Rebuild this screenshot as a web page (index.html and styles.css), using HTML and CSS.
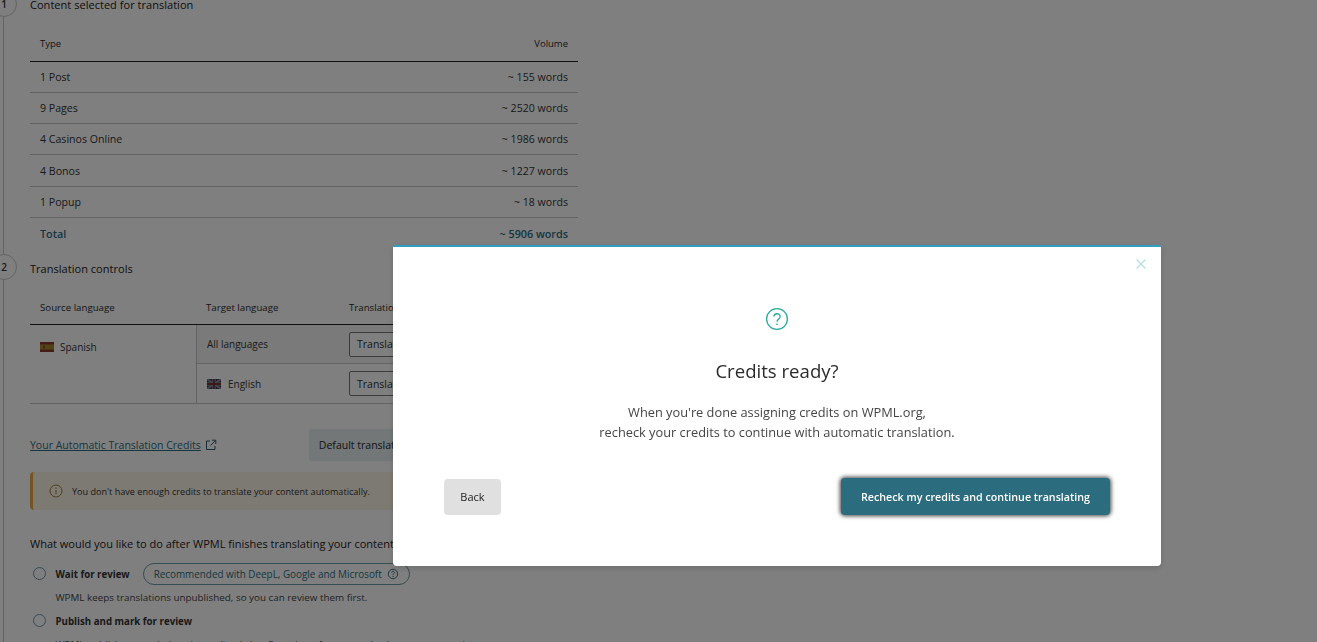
FILE: index.html
```html
<!DOCTYPE html>
<html lang="en">
<head>
<meta charset="utf-8">
<title>Credits ready?</title>
<link rel="stylesheet" href="styles.css">
</head>
<body>
<main class="page">
  <div class="rail"></div>
  <section class="step step-one">
    <span class="badge badge-one">1</span>
    <h2 class="step-title">Content selected for translation</h2>
    <table class="volume">
      <thead><tr><th>Type</th><th class="num">Volume</th></tr></thead>
      <tbody>
        <tr><td>1 Post</td><td class="num">~ 155 words</td></tr>
        <tr><td>9 Pages</td><td class="num">~ 2520 words</td></tr>
        <tr><td>4 Casinos Online</td><td class="num">~ 1986 words</td></tr>
        <tr><td>4 Bonos</td><td class="num">~ 1227 words</td></tr>
        <tr><td>1 Popup</td><td class="num">~ 18 words</td></tr>
        <tr class="total"><td>Total</td><td class="num">~ 5906 words</td></tr>
      </tbody>
    </table>
  </section>
  <section class="step step-two">
    <span class="badge badge-two">2</span>
    <h2 class="step-title">Translation controls</h2>
    <div class="controls">
      <div class="c-head c-source">Source language</div>
      <div class="c-head c-target">Target language</div>
      <div class="c-head c-method">Translation method</div>
      <div class="c-lang">
        <svg class="flag" viewBox="0 0 14 10"><rect width="14" height="10" fill="#8a3b2c"/><rect y="2.5" width="14" height="5" fill="#a5892f"/><rect x="3" y="3.5" width="2" height="3" fill="#8a4a2c"/></svg>
        <span>Spanish</span>
      </div>
      <div class="c-cell c-row1 c-tint">All languages</div>
      <div class="c-cell c-row1 c-tint c-pick"><div class="select">Translate automatically</div></div>
      <div class="c-cell c-row2">
        <svg class="flag" viewBox="0 0 14 10"><rect width="14" height="10" fill="#2f3a63"/><path d="M0 0L14 10M14 0L0 10" stroke="#8a8a90" stroke-width="2"/><path d="M7 0V10M0 5H14" stroke="#8a8a90" stroke-width="3.4"/><path d="M7 0V10M0 5H14" stroke="#7a2d35" stroke-width="1.8"/></svg>
        <span>English</span>
      </div>
      <div class="c-cell c-row2 c-pick"><div class="select">Translate automatically</div></div>
    </div>
    <div class="credits">
      <a class="credits-link" href="#">Your Automatic Translation Credits</a>
      <svg class="ext" viewBox="0 0 12 12"><path d="M5 2H1.5V10.5H10V7M7 1.2H10.8V5M10.6 1.4L5.5 6.5" fill="none" stroke="#2b5f6e" stroke-width="1"/></svg>
      <div class="default-btn">Default translation settings</div>
    </div>
    <div class="warning">
      <svg class="warn-icon" viewBox="0 0 14 14"><circle cx="7" cy="7" r="6" fill="none" stroke="#a67f3a" stroke-width="1"/><path d="M7 6V10.4M7 3.6V5" stroke="#a67f3a" stroke-width="1"/></svg>
      <span>You don't have enough credits to translate your content automatically.</span>
    </div>
    <h3 class="after-title">What would you like to do after WPML finishes translating your content?</h3>
    <div class="option">
      <span class="radio"></span>
      <div class="option-line">
        <strong>Wait for review</strong>
        <span class="pill">Recommended with DeepL, Google and Microsoft
          <svg class="pill-icon" viewBox="0 0 12 12"><circle cx="6" cy="6" r="4.7" fill="none" stroke="#2b5f6e" stroke-width=".9"/><path d="M4.6 4.8C4.6 3 7.4 3 7.4 4.7C7.4 5.8 6 5.8 6 7.1M6 8V9" fill="none" stroke="#2b5f6e" stroke-width=".9"/></svg>
        </span>
      </div>
      <p class="option-text">WPML keeps translations unpublished, so you can review them first.</p>
    </div>
    <div class="option">
      <span class="radio"></span>
      <div class="option-line"><strong>Publish and mark for review</strong></div>
      <p class="option-text">WPML publishes translations immediately but flags them for you to check at your convenience.</p>
    </div>
  </section>
</main>
<div class="overlay"></div>
<div class="modal">
  <svg class="close" viewBox="0 0 12 12"><path d="M1.5 1.5L10.5 10.5M10.5 1.5L1.5 10.5" stroke="#b5dbe6" stroke-width="1.1" fill="none"/></svg>
  <svg class="q-icon" viewBox="0 0 24 24"><circle cx="12" cy="12" r="10.4" fill="none" stroke="#2aaa9c" stroke-width="1.3"/><path d="M8.9 9.6C8.9 5.8 15.2 5.8 15.2 9.5C15.2 12 12 12 12 14.8" fill="none" stroke="#2aaa9c" stroke-width="1.3"/><path d="M12 16.4V18" stroke="#2aaa9c" stroke-width="1.4"/></svg>
  <h1 class="modal-title">Credits ready?</h1>
  <p class="modal-text">When you're done assigning credits on WPML.org,<br>recheck your credits to continue with automatic translation.</p>
  <div class="modal-actions">
    <button class="btn btn-back" type="button">Back</button>
    <button class="btn btn-primary" type="button">Recheck my credits and continue translating</button>
  </div>
</div>
</body>
</html>
```
FILE: styles.css
```css
* { box-sizing: border-box; }
html, body { margin: 0; height: 100%; overflow: hidden; }
body {
  background: #fff;
  color: #2b2b2b;
  font-family: "Open Sans", "Liberation Sans", sans-serif;
  font-size: 11px;
}
.page {
  position: relative;
  width: 1317px;
  height: 642px;
  overflow: hidden;
  padding-left: 30px;
}
.rail {
  position: absolute;
  left: 3px;
  top: 0;
  bottom: 0;
  width: 1px;
  background: #c8c8c8;
}
.step { position: relative; }
.step-one { margin-top: -4px; height: 258px; }
.badge {
  position: absolute;
  left: -39px;
  width: 26px;
  height: 26px;
  border: 1px solid #c8c8c8;
  border-radius: 50%;
  background: #fff;
  display: flex;
  align-items: center;
  justify-content: center;
  font-size: 10px;
  font-weight: 600;
  color: #333;
}
.badge-one { top: -5px; }
.badge-two { top: 0; }
.step-title {
  margin: 0;
  font-size: 11px;
  font-weight: 400;
  line-height: 18px;
  color: #222;
  letter-spacing: .03px;
}
.volume {
  width: 548px;
  margin-top: 15px;
  border-collapse: collapse;
  table-layout: fixed;
}
.volume th {
  height: 32px;
  padding: 0 10px 3px;
  text-align: left;
  font-size: 9.5px;
  font-weight: 500;
  border-bottom: 1px solid #222;
}
.volume td {
  height: 31.3px;
  padding: 0 10px;
  font-size: 10.6px;
  color: #333;
  border-bottom: 1px solid #c6c6c6;
}
.volume .num { text-align: right; }
.volume .total td {
  border-bottom: 0;
  color: #2b6c7e;
  font-size: 10.8px;
  font-weight: 600;
}
.step-two { padding-top: 6px; }
.controls {
  margin-top: 15px;
  width: 700px;
  display: grid;
  grid-template-columns: 167px 142px 1fr;
  grid-template-rows: 32px 39px 40px;
  font-size: 10px;
}
.c-head {
  display: flex;
  align-items: center;
  padding: 0 0 3px 10px;
  font-size: 9.7px;
  font-weight: 500;
  border-bottom: 1px solid #222;
}
.c-target { padding-left: 9px; }
.c-lang {
  grid-row: 2 / 4;
  grid-column: 1;
  padding: 16px 0 0 10px;
  display: flex;
  align-items: flex-start;
  gap: 6px;
  border-right: 1px solid #c6c6c6;
  border-bottom: 1px solid #c6c6c6;
  color: #333;
  line-height: 12px;
}
.c-lang .flag { margin-top: 1px; }
.c-cell {
  display: flex;
  align-items: center;
  gap: 7px;
  padding-left: 10px;
  border-bottom: 1px solid #c6c6c6;
  color: #333;
}
.c-tint { background: #f5f5f5; }
.flag { width: 14px; height: 10px; flex: none; }
.select {
  width: 210px;
  height: 25px;
  padding-left: 7px;
  display: flex;
  align-items: center;
  border: 1px solid #777;
  border-radius: 2px;
  background: #fff;
  font-size: 10.5px;
}
.credits {
  margin-top: 25px;
  height: 32px;
  display: flex;
  align-items: center;
}
.credits-link {
  color: #2b6c7e;
  font-size: 10.5px;
  text-decoration: underline;
}
.ext { width: 12px; height: 12px; margin-left: 4px; }
.default-btn {
  margin-left: 92px;
  width: 200px;
  height: 32px;
  padding-left: 10px;
  display: flex;
  align-items: center;
  background: #e6eef0;
  border-radius: 3px;
  font-size: 10.5px;
}
.warning {
  margin-top: 11px;
  width: 600px;
  height: 38px;
  padding-left: 16px;
  display: flex;
  align-items: center;
  gap: 9px;
  background: #fbf5e6;
  border-left: 3px solid #e8aa45;
  border-radius: 4px 0 0 4px;
  font-size: 9.1px;
  color: #333;
}
.warn-icon { width: 14px; height: 14px; }
.after-title {
  margin: 25px 0 0;
  font-size: 11px;
  font-weight: 400;
  line-height: 18px;
  color: #222;
}
.option { position: relative; padding-left: 25.5px; }
.option-line {
  display: flex;
  align-items: center;
  gap: 13px;
  height: 22px;
  margin-top: 10px;
  font-size: 9.7px;
}
.option + .option .option-line { margin-top: 4px; }
.option-line strong { font-weight: 700; color: #333; }
.pill {
  height: 22px;
  padding: 0 10px;
  display: flex;
  align-items: center;
  gap: 5px;
  border: 1px solid #6a9aa8;
  border-radius: 11px;
  color: #2b6c7e;
  font-size: 9.9px;
}
.pill-icon { width: 12px; height: 12px; }
.option-text {
  margin: 4px 0 0;
  font-size: 9.85px;
  line-height: 17px;
  color: #444;
}
.radio {
  position: absolute;
  left: 3px;
  top: 4px;
  width: 13px;
  height: 13px;
  border: 1px solid #6a9aa8;
  border-radius: 50%;
  background: #fff;
}
.overlay {
  position: fixed;
  inset: 0;
  background: rgba(0, 0, 0, .5);
}
.modal {
  position: fixed;
  left: 393px;
  top: 245px;
  width: 768px;
  height: 321px;
  padding-top: 60px;
  display: flex;
  flex-direction: column;
  align-items: center;
  background: #fff;
  border-top: 2px solid #2f9ec4;
  border-radius: 2px 2px 4px 4px;
  box-shadow: 0 2px 6px rgba(0, 0, 0, .15);
}
.close {
  position: absolute;
  right: 14px;
  top: 11px;
  width: 12px;
  height: 12px;
}
.q-icon { width: 24px; height: 24px; flex: none; }
.modal-title {
  margin: 28px 0 0;
  font-size: 18.6px;
  font-weight: 400;
  line-height: 24px;
  color: #2b2b2b;
}
.modal-text {
  margin: 19px 0 0;
  text-align: center;
  font-size: 12.8px;
  line-height: 20px;
  color: #444;
}
.modal-actions {
  width: 666px;
  margin-top: 36px;
  display: flex;
  justify-content: space-between;
  align-items: center;
}
.btn {
  border: 0;
  border-radius: 4px;
  font-family: inherit;
  font-size: 11px;
}
.btn-back {
  width: 57px;
  height: 36px;
  background: #e0e0e0;
  color: #222;
}
.btn-primary {
  width: 269px;
  height: 37px;
  background: #2b6c7e;
  color: #fff;
  font-size: 10.7px;
  font-weight: 600;
  box-shadow: 0 0 4px 1px rgba(0, 0, 0, .75);
}
```
